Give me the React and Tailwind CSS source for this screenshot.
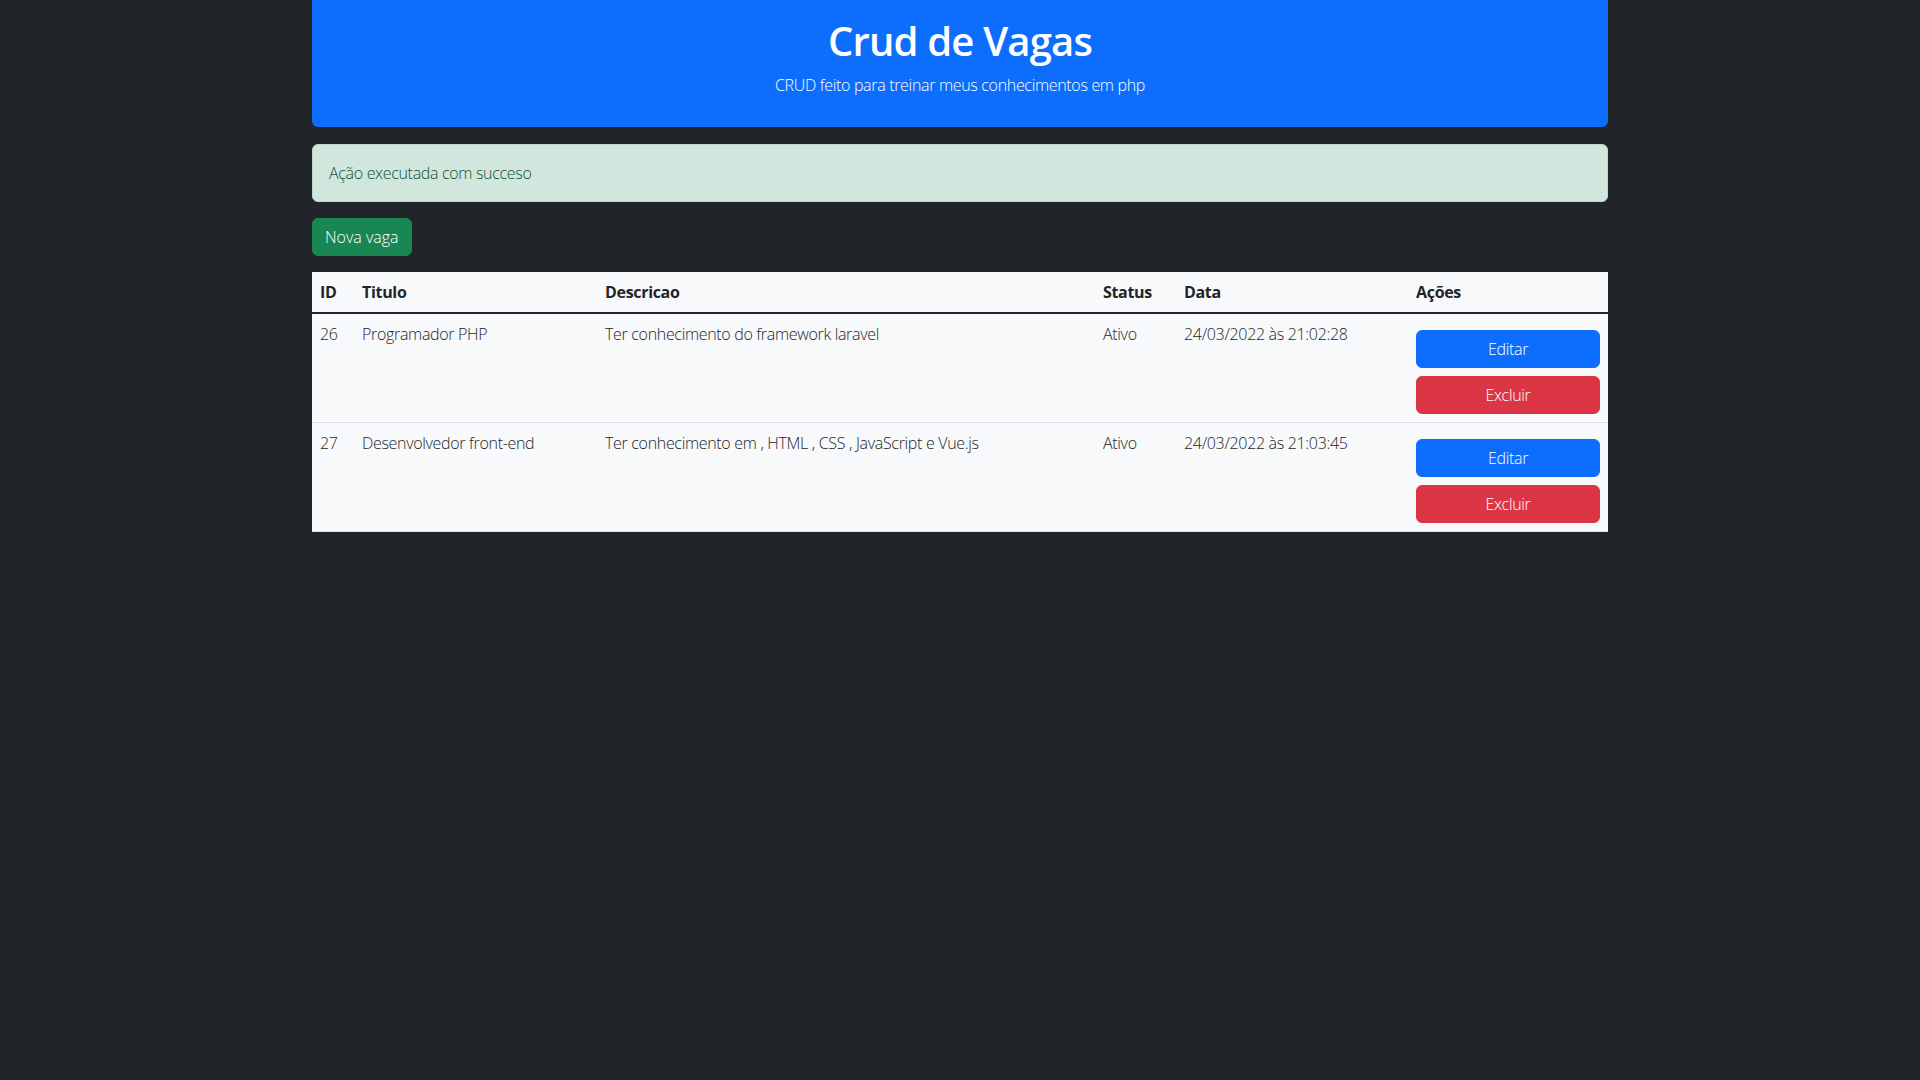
const vagas = [
  {
    id: 26,
    titulo: 'Programador PHP',
    descricao: 'Ter conhecimento do framework laravel',
    status: 'Ativo',
    data: '24/03/2022 às 21:02:28',
  },
  {
    id: 27,
    titulo: 'Desenvolvedor front-end',
    descricao: 'Ter conhecimento em , HTML , CSS , JavaScript e Vue.js',
    status: 'Ativo',
    data: '24/03/2022 às 21:03:45',
  },
]

export default function App() {
  return (
    <div className="min-h-screen bg-[#212529] font-['Open_Sans',sans-serif] text-[#212529]">
      <div className="mx-auto w-[1320px] px-3">
        {/* Cabecalho */}
        <div className="bg-[#0d6efd] text-white text-center px-4 pt-[17px] rounded-b-md h-[127px]">
          <h1 className="text-[40px] leading-[48px] font-semibold tracking-[-0.02em] mb-2">Crud de Vagas</h1>
          <p className="text-base leading-6 font-light tracking-[-0.02em]">CRUD feito para treinar meus conhecimentos em php</p>
        </div>

        {/* Alerta */}
        <div className="mt-[17px] mb-4 bg-[#d1e7dd] border border-[#badbcc] text-[#0f5132] rounded-md p-4 text-base leading-6 font-light tracking-[-0.02em]">
          Ação executada com succeso
        </div>

        <button className="bg-[#198754] border border-[#198754] text-white rounded-md px-3 py-1.5 text-base leading-6 font-light">
          Nova vaga
        </button>

        <table className="mt-4 w-full table-fixed bg-[#f8f9fa] text-base leading-6 text-left tracking-[-0.02em]">
          <colgroup>
            <col className="w-[42px]" />
            <col className="w-[243px]" />
            <col className="w-[498px]" />
            <col className="w-[81px]" />
            <col className="w-[232px]" />
            <col className="w-[200px]" />
          </colgroup>
          <thead>
            <tr className="border-b-2 border-[#212529]">
              <th className="p-2 font-bold">ID</th>
              <th className="p-2 font-bold">Titulo</th>
              <th className="p-2 font-bold">Descricao</th>
              <th className="p-2 font-bold">Status</th>
              <th className="p-2 font-bold">Data</th>
              <th className="p-2 font-bold">Ações</th>
            </tr>
          </thead>
          <tbody>
            {vagas.map((v) => (
              <tr key={v.id} className="border-b border-[#dee2e6] align-top font-light">
                <td className="p-2">{v.id}</td>
                <td className="p-2">{v.titulo}</td>
                <td className="p-2">{v.descricao}</td>
                <td className="p-2">{v.status}</td>
                <td className="p-2">{v.data}</td>
                <td className="p-2">
                  <div className="mt-2 flex flex-col gap-2">
                    <button className="w-full bg-[#0d6efd] border border-[#0d6efd] text-white rounded-md py-1.5 leading-6">Editar</button>
                    <button className="w-full bg-[#dc3545] border border-[#dc3545] text-white rounded-md py-1.5 leading-6">Excluir</button>
                  </div>
                </td>
              </tr>
            ))}
          </tbody>
        </table>
      </div>
    </div>
  )
}
